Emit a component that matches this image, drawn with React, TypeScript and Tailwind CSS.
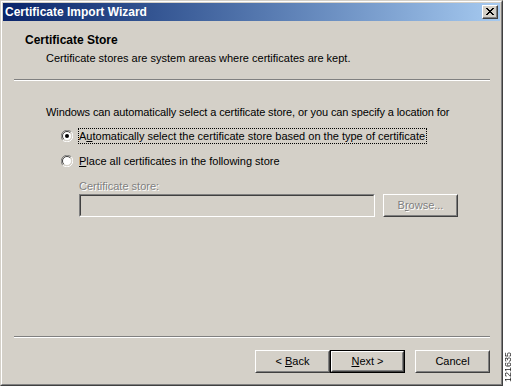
import React from "react";

const font = { fontFamily: '"Liberation Sans", Arial, sans-serif' };

function Radio({ checked }: { checked: boolean }) {
  return (
    <svg width="12" height="12" viewBox="0 0 12 12" className="shrink-0">
      <path d="M10.24 1.76 A6 6 0 0 0 1.76 10.24" fill="none" stroke="#808080" strokeWidth="1" />
      <path d="M1.76 10.24 A6 6 0 0 0 10.24 1.76" fill="none" stroke="#ffffff" strokeWidth="1" />
      <circle cx="6" cy="6" r="4.5" fill="#ffffff" />
      <path d="M9.2 2.8 A4.5 4.5 0 0 0 2.8 9.2" fill="none" stroke="#404040" strokeWidth="1" />
      <path d="M2.8 9.2 A4.5 4.5 0 0 0 9.2 2.8" fill="none" stroke="#d4d0c8" strokeWidth="1" />
      {checked && <circle cx="6" cy="6" r="2" fill="#000000" />}
    </svg>
  );
}

function Button({
  children,
  isDefault,
  disabled,
}: {
  children: React.ReactNode;
  isDefault?: boolean;
  disabled?: boolean;
}) {
  const inner = (
    <div className="flex-1 flex border-t border-l border-t-white border-l-white border-r border-b border-r-[#404040] border-b-[#404040]">
      <div className="flex-1 flex items-center justify-center border-t border-l border-t-[#d4d0c8] border-l-[#d4d0c8] border-r border-b border-r-[#808080] border-b-[#808080]">
        <span
          className={
            "text-[11px] leading-[13px] " +
            (disabled ? "text-[#808080] [text-shadow:1px_1px_0_#ffffff]" : "text-black")
          }
        >
          {children}
        </span>
      </div>
    </div>
  );
  if (isDefault) {
    return <div className="w-[75px] h-[23px] flex border border-black">{inner}</div>;
  }
  return <div className="w-[75px] h-[23px] flex">{inner}</div>;
}

function Separator() {
  return <div className="ml-[11px] mr-[10px] h-[2px] border-t border-t-[#808080] border-b border-b-white" />;
}

export default function App() {
  return (
    <div className="w-[514px] h-[386px] flex bg-white overflow-hidden" style={font}>
      <div className="w-[503px] h-[386px] flex border border-t-[#d4d0c8] border-l-[#d4d0c8] border-r-[#404040] border-b-[#404040]">
        <div className="flex-1 flex border border-t-white border-l-white border-r-[#808080] border-b-[#808080] bg-[#d4d0c8] p-[1px]">
          <div className="flex-1 flex flex-col">
            {/* Title bar */}
            <div className="h-[18px] flex items-center justify-between pl-[2px] pr-[2px] bg-gradient-to-r from-[#0a246a] to-[#a6caf0]">
              <span className="text-white font-bold text-[12px] leading-[14px]">Certificate Import Wizard</span>
              <div className="w-[16px] h-[14px] flex border-t border-l border-t-white border-l-white border-r border-b border-r-[#404040] border-b-[#404040] bg-[#d4d0c8]">
                <div className="flex-1 flex items-center justify-center border-r border-b border-r-[#808080] border-b-[#808080]">
                  <svg width="8" height="7" viewBox="0 0 8 7" shapeRendering="crispEdges">
                    <path d="M0 0h2v1H0zM6 0h2v1H6zM1 1h2v1H1zM5 1h2v1H5zM2 2h4v1H2zM3 3h2v1H3zM2 4h4v1H2zM1 5h2v1H1zM5 5h2v1H5zM0 6h2v1H0zM6 6h2v1H6z" fill="#000" />
                  </svg>
                </div>
              </div>
            </div>

            {/* Header */}
            <div className="pt-[12px] flex flex-col">
              <div className="pl-[22px] h-[14px] leading-[14px] text-[12px] font-bold text-black">Certificate Store</div>
              <div className="pl-[43px] mt-[5px] h-[13px] leading-[13px] text-[11px] text-black">
                Certificate stores are system areas where certificates are kept.
              </div>
            </div>
            <div className="mt-[14px]">
              <Separator />
            </div>

            {/* Body */}
            <div className="flex flex-col">
              <div className="pl-[43px] mt-[25px] h-[13px] leading-[13px] text-[11px] tracking-[-0.1px] text-black whitespace-nowrap">
                Windows can automatically select a certificate store, or you can specify a location for
              </div>
              <div className="mt-[9px] h-[16px] pl-[58px] flex items-center gap-[5px]">
                <Radio checked />
                <span className="border border-dotted border-black h-[16px] leading-[14px] text-[11px] text-black pr-[1px]">
                  A<span className="underline">u</span>tomatically select the certificate store based on the type of certificate
                </span>
              </div>
              <div className="mt-[9px] h-[16px] pl-[58px] flex items-center gap-[6px]">
                <Radio checked={false} />
                <span className="leading-[14px] text-[11px] text-black">
                  <span className="underline">P</span>lace all certificates in the following store
                </span>
              </div>
              <div className="pl-[76px] mt-[11px] h-[13px] leading-[13px] text-[11px] text-[#808080] [text-shadow:1px_1px_0_#ffffff]">
                Certificate store:
              </div>
              <div className="pl-[76px] mt-[1px] flex items-start gap-[8px]">
                <div className="w-[296px] h-[23px] flex border border-t-[#808080] border-l-[#808080] border-r-white border-b-white">
                  <div className="flex-1 border border-t-[#404040] border-l-[#404040] border-r-[#d4d0c8] border-b-[#d4d0c8] bg-[#d4d0c8]" />
                </div>
                <Button disabled>
                  B<span className="underline">r</span>owse...
                </Button>
              </div>
            </div>

            <div className="flex-1" />

            {/* Footer */}
            <Separator />
            <div className="mt-[12px] mb-[10px] pr-[10px] flex justify-end">
              <Button>
                &lt; <span className="underline">B</span>ack
              </Button>
              <div className="ml-[0px]">
                <Button isDefault>
                  <span className="underline">N</span>ext &gt;
                </Button>
              </div>
              <div className="ml-[10px]">
                <Button>Cancel</Button>
              </div>
            </div>
          </div>
        </div>
      </div>
      <div className="flex-1 flex flex-col justify-end items-center pb-[4px]">
        <span className="[writing-mode:vertical-rl] rotate-180 text-[9px] leading-[9px] text-[#222]" style={font}>
          121635
        </span>
      </div>
    </div>
  );
}
